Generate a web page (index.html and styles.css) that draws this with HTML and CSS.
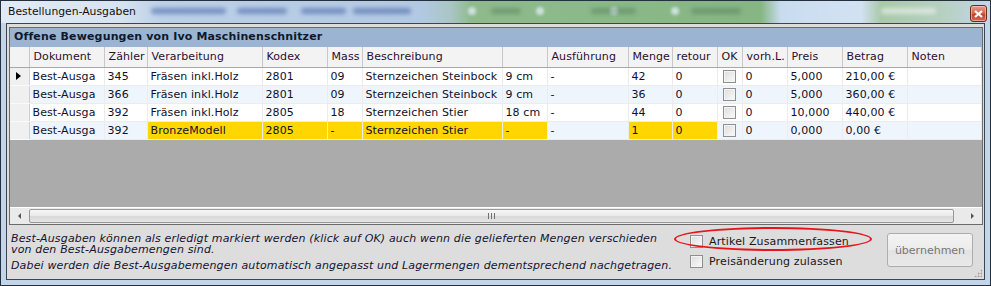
FILE: index.html
```html
<!DOCTYPE html>
<html lang="de">
<head>
  <meta charset="UTF-8" />
  <title>Bestellungen-Ausgaben</title>
  <link rel="stylesheet" href="styles.css">
</head>
<body>
  <div class="window">
    <div class="titlebar">
      <span class="title">Bestellungen-Ausgaben</span>
      <div class="backdrop">
        <span class="blob b1"></span>
        <span class="blob b2"></span>
        <span class="blob b3"></span>
        <span class="blob b4"></span>
        <span class="dot d1"></span>
        <span class="dot d2"></span>
        <span class="dot d3"></span>
        <span class="dot d4"></span>
        <span class="blob g1"></span>
        <span class="blob g2"></span>
        <span class="blob g3"></span>
        <span class="blob g4"></span>
      </div>
      <button class="close-btn" aria-label="Schließen">
        <svg width="9" height="8" viewBox="0 0 9 8"><path d="M1 1 L8 7 M8 1 L1 7" stroke="#fff" stroke-width="2.2" /></svg>
      </button>
    </div>

    <div class="client">
      <div class="grid">
        <div class="caption">Offene Bewegungen von Ivo Maschinenschnitzer</div>
        <table>
          <colgroup>
            <col style="width:19px"><col style="width:75px"><col style="width:43px"><col style="width:115px">
            <col style="width:65px"><col style="width:35px"><col style="width:140px"><col style="width:45px">
            <col style="width:81px"><col style="width:44px"><col style="width:45px"><col style="width:25px">
            <col style="width:45px"><col style="width:55px"><col style="width:65px"><col>
          </colgroup>
          <thead>
            <tr>
              <th></th><th>Dokument</th><th>Zähler</th><th>Verarbeitung</th><th>Kodex</th><th>Mass</th>
              <th>Beschreibung</th><th></th><th>Ausführung</th><th>Menge</th><th>retour</th><th>OK</th>
              <th>vorh.L.</th><th>Preis</th><th>Betrag</th><th>Noten</th>
            </tr>
          </thead>
          <tbody>
            <tr>
              <td class="rowhead"><span class="arrow"></span></td>
              <td>Best-Ausga</td><td>345</td><td>Fräsen inkl.Holz</td><td>2801</td><td>09</td>
              <td>Sternzeichen Steinbock</td><td>9 cm</td><td>-</td><td>42</td><td>0</td>
              <td class="check"><span class="box"></span></td><td>0</td><td>5,000</td><td>210,00 €</td><td></td>
            </tr>
            <tr class="alt">
              <td class="rowhead"></td>
              <td>Best-Ausga</td><td>366</td><td>Fräsen inkl.Holz</td><td>2801</td><td>09</td>
              <td>Sternzeichen Steinbock</td><td>9 cm</td><td>-</td><td>36</td><td>0</td>
              <td class="check"><span class="box"></span></td><td>0</td><td>5,000</td><td>360,00 €</td><td></td>
            </tr>
            <tr>
              <td class="rowhead"></td>
              <td>Best-Ausga</td><td>392</td><td>Fräsen inkl.Holz</td><td>2805</td><td>18</td>
              <td>Sternzeichen Stier</td><td>18 cm</td><td>-</td><td>44</td><td>0</td>
              <td class="check"><span class="box"></span></td><td>0</td><td>10,000</td><td>440,00 €</td><td></td>
            </tr>
            <tr class="alt">
              <td class="rowhead"></td>
              <td>Best-Ausga</td><td>392</td><td class="mark">BronzeModell</td><td class="mark">2805</td><td class="mark">-</td>
              <td class="mark">Sternzeichen Stier</td><td class="mark">-</td><td>-</td><td class="mark">1</td><td class="mark">0</td>
              <td class="check"><span class="box"></span></td><td>0</td><td>0,000</td><td>0,00 €</td><td></td>
            </tr>
          </tbody>
        </table>
        <div class="empty"></div>
        <div class="hscroll">
          <span class="arr left"></span>
          <div class="track"><div class="thumb"><span class="grip"></span></div></div>
          <span class="arr right"></span>
        </div>
      </div>

      <div class="footer">
        <div class="hint">
          <p>Best-Ausgaben können als erledigt markiert werden (klick auf OK) auch wenn die gelieferten Mengen verschieden von den Best-Ausgabemengen sind.</p>
          <p class="second">Dabei werden die Best-Ausgabemengen automatisch angepasst und Lagermengen dementsprechend nachgetragen.</p>
        </div>
        <div class="options">
          <span class="ring"></span>
          <label class="opt"><span class="box"></span>Artikel Zusammenfassen</label>
          <label class="opt"><span class="box"></span>Preisänderung zulassen</label>
        </div>
        <button class="apply" disabled>übernehmen</button>
        <span class="grip-corner"></span>
      </div>
    </div>
  </div>
</body>
</html>
```

FILE: styles.css
```css
html, body {
  margin: 0;
  padding: 0;
}
*, *:before, *:after {
  box-sizing: border-box;
}

body {
  font-family: "DejaVu Sans", Verdana, sans-serif;
  font-size: 11px;
  color: #10102a;
  background: #c5d8ea;
}

.window {
  width: 991px;
  height: 286px;
  border: 1px solid #25303c;
  background: #c3d6e9;
  display: flex;
  flex-direction: column;
}

/* Title bar */
.titlebar {
  position: relative;
  height: 22px;
  flex: none;
  overflow: hidden;
  background: linear-gradient(90deg, #e2ebf5 0, #d6e3f1 120px, #bcd0e7 160px, #b2c9e3 420px, #a9c6c4 450px, #8fbb8c 470px, #86b684 760px, #c9dcef 780px, #d2e2f3 860px, #a9c9a9 880px, #b6d0c0 940px, #c3d6e9 990px);
}
.backdrop {
  position: absolute;
  inset: 0;
}
.blob {
  position: absolute;
  top: 7px;
  height: 6px;
  border-radius: 3px;
  background: rgba(40, 70, 150, 0.45);
  filter: blur(2px);
}
.b1 { left: 150px; width: 75px; }
.b2 { left: 236px; width: 50px; }
.b3 { left: 300px; width: 45px; }
.b4 { left: 352px; width: 58px; }
.g1 { left: 490px; width: 30px; background: rgba(60, 100, 70, 0.35); }
.g2 { left: 590px; width: 45px; background: rgba(60, 100, 70, 0.35); }
.g3 { left: 690px; width: 50px; background: rgba(60, 100, 70, 0.35); }
.g4 { left: 880px; width: 55px; background: rgba(255, 255, 255, 0.5); }
.dot {
  position: absolute;
  top: 6px;
  width: 8px;
  height: 8px;
  border-radius: 50%;
  background: rgba(220, 235, 240, 0.8);
  filter: blur(1.5px);
}
.d1 { left: 467px; }
.d2 { left: 535px; }
.d3 { left: 609px; }
.d4 { left: 670px; }

.title {
  position: relative;
  z-index: 1;
  display: block;
  padding: 4px 0 0 7px;
  font-family: "DejaVu Sans", sans-serif;
  font-size: 10.8px;
  color: #101010;
}

.close-btn {
  position: absolute;
  z-index: 1;
  right: 3px;
  top: 4px;
  width: 17px;
  height: 17px;
  padding: 0;
  border: 1px solid #6e2a1e;
  border-radius: 3px;
  background: linear-gradient(#e9a08f, #d2604a 50%, #c0402a 51%, #d4684f);
  display: flex;
  align-items: center;
  justify-content: center;
  box-shadow: inset 0 0 0 1px rgba(255, 220, 210, 0.5);
}

/* Client area */
.client {
  flex: 1;
  margin: 0 5px 5px 5px;
  border: 1px solid #3a4550;
  background: #dddddd;
  display: flex;
  flex-direction: column;
}

.grid {
  margin: 3px 1px 0 2px;
  border: 1px solid #6b6b6b;
  background: #ababab;
  display: flex;
  flex-direction: column;
  height: 198px;
}

.caption {
  height: 19px;
  padding: 2px 0 0 4px;
  background: #9ab4d2;
  font-weight: 700;
  letter-spacing: 0.15px;
  color: #10182a;
}

table {
  border-collapse: collapse;
  table-layout: fixed;
  width: 972px;
  letter-spacing: 0.1px;
}

th, td {
  height: 18px;
  padding: 0 0 0 3px;
  text-align: left;
  white-space: nowrap;
  overflow: hidden;
  font-weight: 400;
}

th {
  height: 20px;
  background: #f3f3f3;
  border-right: 1px solid #c8c8c8;
  border-bottom: 1px solid #a8a8a8;
  color: #2a0f30;
  padding-left: 4px;
}

td {
  background: #fff;
  border: 1px solid #ececec;
  border-top: none;
}
tr.alt td {
  background: #eef5fd;
}
td.rowhead, tr.alt td.rowhead {
  background: #f0f0f0;
  border: 1px solid #fafafa;
  border-right: 1px solid #d0d0d0;
  border-left: none;
}
td.mark, tr.alt td.mark {
  background: #ffd700;
}

.arrow {
  display: block;
  margin-left: 3px;
  width: 0;
  height: 0;
  border-top: 4px solid transparent;
  border-bottom: 4px solid transparent;
  border-left: 5px solid #000;
}

td.check {
  padding-left: 5px;
}
.box {
  display: inline-block;
  width: 13px;
  height: 13px;
  border: 1px solid #8e8f8f;
  background: linear-gradient(135deg, #dcdcdc, #fbfbfb);
  box-shadow: inset 0 0 0 1px #f4f4f4;
  vertical-align: middle;
}

.empty {
  flex: 1;
}

.hscroll {
  height: 17px;
  display: flex;
  background: #eaeaea;
  border-top: 1px solid #fff;
}
.arr {
  width: 19px;
  display: flex;
  align-items: center;
  justify-content: center;
}
.arr:after {
  content: "";
  border-top: 3px solid transparent;
  border-bottom: 3px solid transparent;
}
.arr.left:after {
  border-right: 3px solid #555;
}
.arr.right:after {
  border-left: 3px solid #555;
}
.track {
  flex: 1;
  padding: 1px 9px 1px 0;
}
.thumb {
  height: 100%;
  border: 1px solid #989898;
  border-radius: 2px;
  background: linear-gradient(#f6f6f6, #e9e9e9 50%, #d8d8d8 51%, #e4e4e4);
  display: flex;
  align-items: center;
  justify-content: center;
}
.grip {
  width: 7px;
  height: 6px;
  background: repeating-linear-gradient(90deg, #707070 0 1px, transparent 1px 3px);
}

/* Footer */
.footer {
  flex: 1;
  position: relative;
  display: flex;
  align-items: flex-start;
}

.hint {
  width: 660px;
  flex: none;
  padding: 8px 0 0 4px;
  font-style: italic;
  letter-spacing: 0.15px;
  color: #141430;
}
.hint p {
  margin: 0;
  line-height: 11px;
  width: 656px;
}
.hint p.second {
  margin-top: 4px;
  line-height: 14px;
  white-space: nowrap;
}

.options {
  position: relative;
  margin-left: 23px;
  padding-top: 9px;
  display: flex;
  flex-direction: column;
  gap: 6px;
  letter-spacing: 0.15px;
}
.opt {
  display: flex;
  align-items: center;
  gap: 6px;
  height: 14px;
  color: #181818;
}
.ring {
  position: absolute;
  left: -16px;
  top: 2px;
  width: 198px;
  height: 24px;
  border: 2px solid #e8141a;
  border-radius: 50%;
}

.apply {
  margin: 8px 0 0 38px;
  width: 86px;
  height: 34px;
  border: 1px solid #adadad;
  border-radius: 3px;
  background: linear-gradient(#f3f3f3, #ececec 50%, #e3e3e3 51%, #e9e9e9);
  font-family: "DejaVu Sans", Verdana, sans-serif;
  font-size: 11px;
  color: #767676;
  padding: 0;
}

.grip-corner {
  position: absolute;
  right: 2px;
  bottom: 2px;
  width: 8px;
  height: 8px;
  background:
    radial-gradient(circle, #a0a0a0 0.8px, transparent 1.2px) 0 0 / 3px 3px;
  clip-path: polygon(100% 0, 100% 100%, 0 100%);
}
```
